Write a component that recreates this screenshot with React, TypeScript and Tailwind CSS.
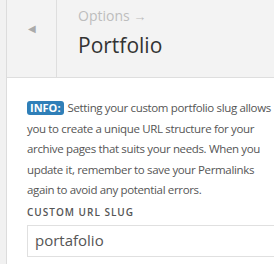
export default function App() {
  return (
    <div
      className="flex h-[264px] w-[274px] overflow-hidden bg-white"
      style={{ fontFamily: '"Open Sans", "Liberation Sans", sans-serif' }}
    >
      <div className="w-[7px] shrink-0 border-r border-[#dcdcdc] bg-[#f1f1f1]" />
      <div className="flex min-w-0 flex-1 flex-col">
        <header className="flex h-[78px] shrink-0 border-b border-[#dedede] bg-[#f3f3f3]">
          <div className="flex w-[50px] shrink-0 items-center justify-center border-r border-[#dedede] pb-[20px]">
            <span className="text-[10px] text-[#aaaaaa]">◀</span>
          </div>
          <div className="flex flex-col pl-[21px] pt-[6px]">
            <div className="text-[14px] leading-[20px] text-[#bdbdbd]">
              Options <span className="text-[13px]">→</span>
            </div>
            <h1 className="mt-[4px] text-[21px] leading-[30px] text-[#333]">Portfolio</h1>
          </div>
        </header>
        <div className="flex flex-col pl-[20px] pt-[20px]">
          <p className="w-[247px] text-[11.5px] leading-[20.5px] tracking-[-0.35px] text-[#555]">
            <span className="mr-[4px] inline-block rounded-[3px] bg-[#2f7fb8] px-[3px] text-[11px] font-bold leading-[14px] tracking-normal text-white">
              INFO:
            </span>
            Setting your custom portfolio slug allows you to create a unique URL structure for your archive pages that suits your needs. When you update it, remember to save your Permalinks again to avoid any potential errors.
          </p>
          <div className="mt-[4px] text-[10px] font-semibold leading-[14px] tracking-[1px] text-[#555]">CUSTOM URL SLUG</div>
          <div className="mt-[6px] flex h-[32px] w-[260px] items-center border border-[#e0e0e0] px-[7px] text-[15px] text-[#555]">
            portafolio
          </div>
        </div>
      </div>
    </div>
  );
}
